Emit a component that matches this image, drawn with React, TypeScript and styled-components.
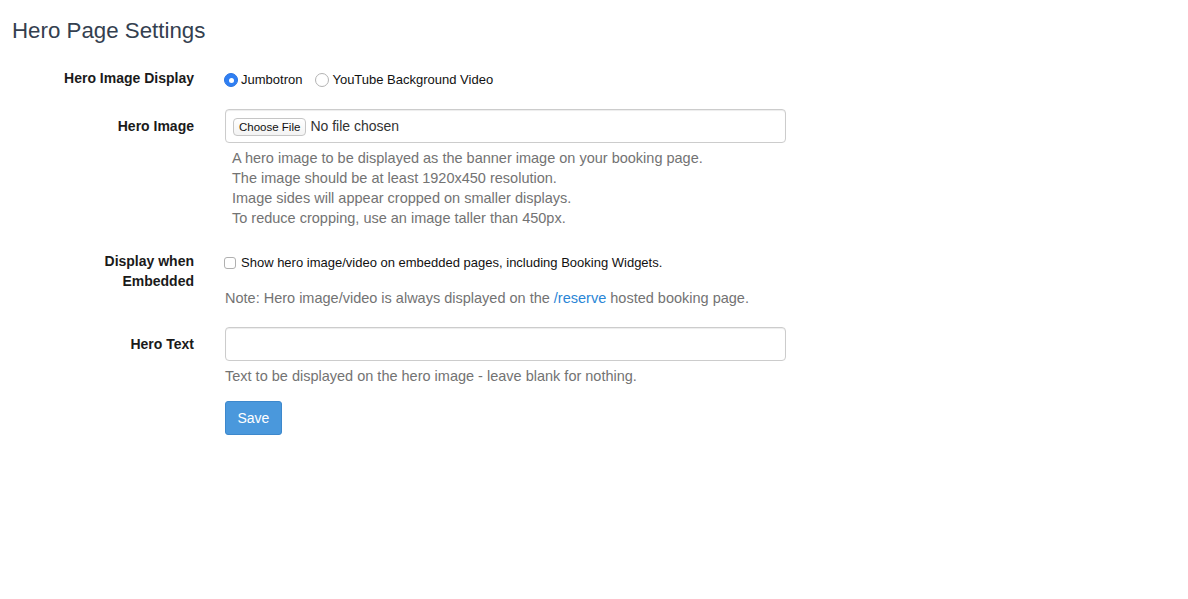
import styled, { createGlobalStyle } from 'styled-components'

const GlobalStyle = createGlobalStyle`
  html, body {
    margin: 0;
    padding: 0;
    background: #fff;
  }
  body {
    font-family: "Liberation Sans", Arial, Helvetica, sans-serif;
    font-size: 14px;
    line-height: 20px;
    color: #333;
  }
  * {
    box-sizing: border-box;
  }
`

const Page = styled.div`
  padding: 19px 0 40px;
  width: 1188px;
`

const Title = styled.h2`
  margin: 0 0 18px 12px;
  font-size: 22.3px;
  line-height: 24px;
  font-weight: 400;
  color: #34404f;
`

const FormRow = styled.div<{ gap?: number }>`
  display: grid;
  grid-template-columns: 182px 561px;
  column-gap: 31px;
  padding-left: 12px;
  margin-bottom: ${({ gap = 15 }) => gap}px;
`

const Label = styled.label`
  padding-top: 7px;
  text-align: right;
  font-weight: 700;
  font-size: 14px;
  line-height: 20px;
  color: #1a1a1a;
`

const Control = styled.div`
  display: flex;
  flex-direction: column;
  align-items: flex-start;
`

const InlineChoices = styled.div`
  display: flex;
  align-items: center;
  gap: 13px;
  min-height: 34px;
  padding-top: 4px;
  margin-left: -1px;
`

const Choice = styled.label`
  display: flex;
  align-items: center;
  gap: 3px;
  font-size: 13px;
  color: #111;
  cursor: pointer;
`

const RadioDot = styled.span<{ checked?: boolean }>`
  width: 14px;
  height: 14px;
  border-radius: 50%;
  display: inline-flex;
  align-items: center;
  justify-content: center;
  background: ${({ checked }) => (checked ? '#2f7ff3' : '#fff')};
  border: 1px solid ${({ checked }) => (checked ? '#2a74e0' : '#b3b3b3')};
  &::after {
    content: '';
    width: 5px;
    height: 5px;
    border-radius: 50%;
    background: #fff;
    display: ${({ checked }) => (checked ? 'block' : 'none')};
  }
`

const CheckBox = styled.span`
  width: 12px;
  height: 12px;
  border: 1px solid #b0b0b0;
  border-radius: 3px;
  background: #fff;
  display: inline-block;
`

const CheckLine = styled.label`
  display: flex;
  align-items: center;
  gap: 5px;
  padding-top: 9px;
  margin-left: -1px;
  font-size: 13px;
  line-height: 20px;
  color: #111;
`

const FileBox = styled.div`
  width: 561px;
  height: 34px;
  border: 1px solid #ccc;
  border-radius: 4px;
  box-shadow: inset 0 1px 1px rgba(0, 0, 0, 0.075);
  display: flex;
  align-items: center;
  gap: 4px;
  padding-left: 7px;
  font-size: 14px;
  color: #333;
`

const FileButton = styled.span`
  height: 18px;
  padding: 0 5px;
  display: inline-flex;
  align-items: center;
  border: 1px solid #c6c6c6;
  border-radius: 4px;
  background: linear-gradient(#fff, #f3f3f3);
  font-size: 11.5px;
  color: #111;
  margin-top: 1px;
`

const TextInput = styled.input`
  width: 561px;
  height: 34px;
  border: 1px solid #ccc;
  border-radius: 4px;
  box-shadow: inset 0 1px 1px rgba(0, 0, 0, 0.075);
  padding: 6px 12px;
  font: inherit;
  outline: none;
`

const Help = styled.p<{ indent?: number; top?: number; bottom?: number }>`
  margin: ${({ top = 5 }) => top}px 0 ${({ bottom = 0 }) => bottom}px;
  padding-left: ${({ indent = 0 }) => indent}px;
  font-size: 14.5px;
  line-height: 20px;
  color: #737373;
`

const Link = styled.a`
  color: #2a86d6;
  text-decoration: none;
`

const SaveButton = styled.button`
  height: 34px;
  padding: 0 11.5px;
  background: #4a98dc;
  border: 1px solid #3d88cc;
  border-radius: 3px;
  color: #fff;
  font: inherit;
  font-size: 14px;
  cursor: pointer;
`

export default function App() {
  return (
    <Page>
      <GlobalStyle />
      <Title>Hero Page Settings</Title>

      <FormRow gap={14}>
        <Label>Hero Image Display</Label>
        <Control>
          <InlineChoices>
            <Choice>
              <RadioDot checked />
              Jumbotron
            </Choice>
            <Choice>
              <RadioDot />
              YouTube Background Video
            </Choice>
          </InlineChoices>
        </Control>
      </FormRow>

      <FormRow>
        <Label>Hero Image</Label>
        <Control>
          <FileBox>
            <FileButton>Choose File</FileButton>
            No file chosen
          </FileBox>
          <Help indent={7} bottom={1}>
            A hero image to be displayed as the banner image on your booking page.
            <br />
            The image should be at least 1920x450 resolution.
            <br />
            Image sides will appear cropped on smaller displays.
            <br />
            To reduce cropping, use an image taller than 450px.
          </Help>
        </Control>
      </FormRow>

      <FormRow gap={19}>
        <Label>
          Display when
          <br />
          Embedded
        </Label>
        <Control>
          <CheckLine>
            <CheckBox />
            Show hero image/video on embedded pages, including Booking Widgets.
          </CheckLine>
          <Help top={15}>
            Note: Hero image/video is always displayed on the <Link href="#">/reserve</Link> hosted booking page.
          </Help>
        </Control>
      </FormRow>

      <FormRow>
        <Label>Hero Text</Label>
        <Control>
          <TextInput type="text" />
          <Help>Text to be displayed on the hero image - leave blank for nothing.</Help>
        </Control>
      </FormRow>

      <FormRow>
        <span />
        <Control>
          <SaveButton>Save</SaveButton>
        </Control>
      </FormRow>
    </Page>
  )
}
